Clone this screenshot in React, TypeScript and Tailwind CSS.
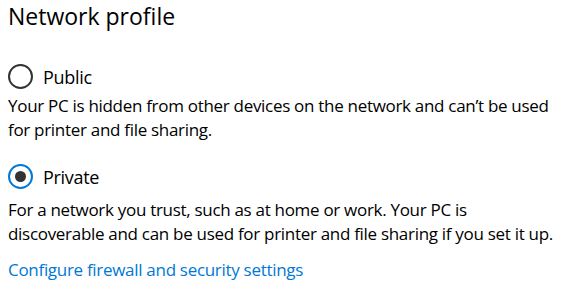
import React, { useState } from 'react';

const font = { fontFamily: '"Open Sans", "Noto Sans", sans-serif' };

function Radio({ checked, label, onClick }: { checked: boolean; label: string; onClick: () => void }) {
    return (
        <button type="button" onClick={onClick} className="flex items-center gap-[10px] h-[26px]">
            {checked ? (
                <span className="w-[25px] h-[25px] rounded-full border-[2.5px] border-[#0078d7] flex items-center justify-center">
                    <span className="w-[11px] h-[11px] rounded-full bg-[#333]" />
                </span>
            ) : (
                <span className="w-[25px] h-[25px] rounded-full border-[2.5px] border-[#333]" />
            )}
            <span className="text-[18px] leading-[26px] tracking-[-0.3px] text-black pt-[2px]">{label}</span>
        </button>
    );
}

export default function App() {
    const [profile, setProfile] = useState<'public' | 'private'>('private');

    return (
        <div className="w-[575px] h-[296px] bg-white pl-2 overflow-hidden" style={font}>
            {/* titel */}
            <h1 className="text-[23px] leading-[32px] text-black">Network profile</h1>

            <div className="mt-[31px]">
                <Radio checked={profile === 'public'} label="Public" onClick={() => setProfile('public')} />
            </div>
            <p className="text-[17px] leading-[24px] tracking-[-0.3px] text-black mt-[5px] whitespace-nowrap">
                Your PC is hidden from other devices on the network and can’t be used<br />
                for printer and file sharing.
            </p>

            <div className="mt-[21px]">
                <Radio checked={profile === 'private'} label="Private" onClick={() => setProfile('private')} />
            </div>
            <p className="text-[17px] leading-[24px] tracking-[-0.3px] text-black mt-[9px] whitespace-nowrap">
                For a network you trust, such as at home or work. Your PC is<br />
                discoverable and can be used for printer and file sharing if you set it up.
            </p>

            <a href="#" className="block mt-[12px] text-[17px] leading-[24px] tracking-[-0.3px] text-[#0078d7]">
                Configure firewall and security settings
            </a>
        </div>
    );
}
